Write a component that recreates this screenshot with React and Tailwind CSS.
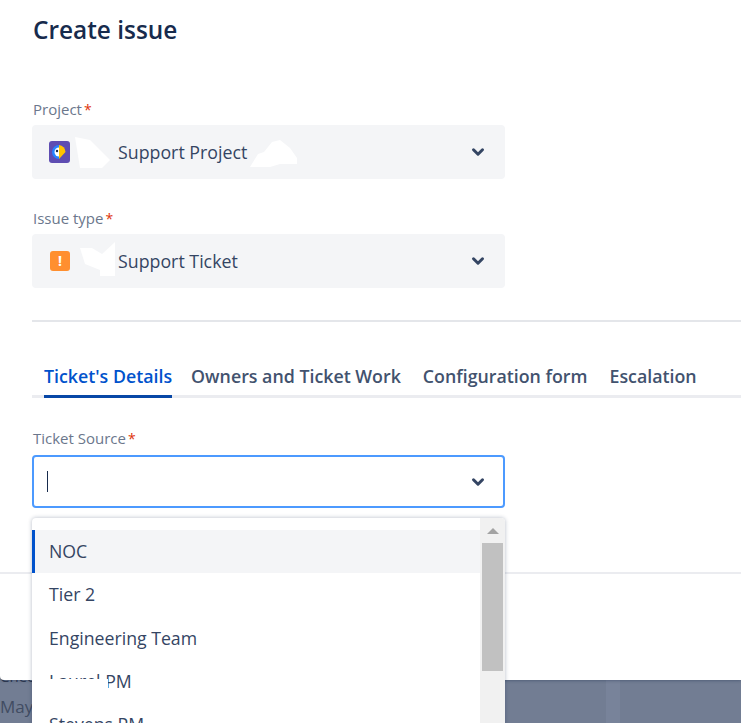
import { ChevronDown } from "lucide-react";

const Label = ({ children }) => (
  <div className="pl-[1px] text-[15px] leading-[18px] font-medium text-[#6b778c]">
    {children}
    <span className="ml-[2px] text-[14px] leading-none text-[#de350b]">*</span>
  </div>
);

const Chevron = () => <ChevronDown size={18} strokeWidth={4} className="text-[#344563]" />;

const ProjectIcon = () => (
  <svg width="21" height="22" viewBox="0 0 21 22" className="ml-[1px] shrink-0">
    <rect width="21" height="22" rx="3" fill="#5e4db2" />
    <path d="M10 4a7 7 0 0 0 0 14z" fill="#2684ff" />
    <path d="M10 6.5a4.5 4.5 0 0 0 0 9z" fill="#ffffff" />
    <path d="M10 4a7 7 0 0 1 6.5 7L10 18z" fill="#ffc400" />
    <circle cx="8" cy="10" r="1.2" fill="#172b4d" />
  </svg>
);

const TicketIcon = () => (
  <div className="ml-[2px] flex h-5 w-5 shrink-0 items-center justify-center rounded-[3px] bg-[#ff8f2f]">
    <span className="text-[14px] leading-none font-bold text-white">!</span>
  </div>
);

// white scribbles that hide names in the screenshot
const Blob = ({ className, d, w, h }) => (
  <svg width={w} height={h} viewBox={`0 0 ${w} ${h}`} className={`absolute ${className}`}>
    <path d={d} fill="#ffffff" />
  </svg>
);

const tabs = ["Owners and Ticket Work", "Configuration form", "Escalation"];

export default function App() {
  return (
    <div
      className="relative h-[723px] overflow-hidden bg-[#727d93]"
      style={{ fontFamily: '"Open Sans", "Noto Sans", sans-serif' }}
    >
      <div className="absolute left-0 top-[666px] text-[15px] leading-[20px] text-[#2f3a50]">Check</div>
      <div className="absolute left-0 top-[696px] text-[17px] leading-[22px] text-[#414c62]">May/</div>
      <div className="absolute left-[606px] top-0 h-full w-[14px] bg-[#78839a]" />

      <div className="relative h-[680px] rounded-bl-[4px] bg-white shadow-[0_1px_3px_rgba(9,30,66,0.3)]">
        <div className="h-[574px] border-b-2 border-[#ebecf0] pl-[32px]">
          <h1 className="pl-[1px] pt-[14px] text-[24.4px] leading-[32px] font-semibold text-[#172b4d]">Create issue</h1>

          <div className="mt-[54px] w-[473px]">
            <Label>Project</Label>
            <div className="relative mt-[7px] flex h-[54px] items-center justify-between rounded-[4px] bg-[#f4f5f7] pl-[16px] pr-[18px]">
              <div className="flex items-center text-[17.8px] text-[#344563]">
                <ProjectIcon />
                <span className="ml-[48px] whitespace-nowrap">Support Project</span>
              </div>
              <Blob w={38} h={31} className="left-[43px] top-[12px]" d="M0 0l15 3 20 20-8 8H5z" />
              <Blob w={47} h={28} className="left-[218px] top-[15px]" d="M0 27l8-13 6-2 8-10 8-2 10 8 7 10v6H30l-10 3z" />
              <Chevron />
            </div>
          </div>

          <div className="mt-[30px] w-[473px]">
            <Label>Issue type</Label>
            <div className="relative mt-[7px] flex h-[54px] items-center justify-between rounded-[4px] bg-[#f4f5f7] pl-[16px] pr-[18px]">
              <div className="flex items-center text-[17.8px] text-[#344563]">
                <TicketIcon />
                <span className="ml-[48px] whitespace-nowrap">Support Ticket</span>
              </div>
              <Blob w={35} h={34} className="left-[48px] top-[8px]" d="M0 6h12l10 6L35 0v34H20v-6L5 22z" />
              <Chevron />
            </div>
          </div>

          <div className="mt-[32px] h-[2px] bg-[#e4e6ea]" />

          <div className="mt-[42px] flex gap-[22px] border-b-[3px] border-[#ebecf0] pl-[12px] text-[17.8px] leading-[24px] font-semibold">
            <div className="-mb-[3px] -mr-[3px] border-b-[3px] border-[#0747a6] pb-[7px] whitespace-nowrap text-[#0052cc]">Ticket's Details</div>
            {tabs.map((t) => (
              <div key={t} className="pb-[7px] whitespace-nowrap text-[#42526e]">{t}</div>
            ))}
          </div>

          <div className="relative mt-[31px] w-[473px]">
            <Label>Ticket Source</Label>
            <div className="mt-[8px] flex h-[53px] items-center justify-between rounded-[4px] border-2 border-[#4c9aff] bg-white pl-[13px] pr-[16px]">
              <div className="h-[21px] w-[1px] bg-[#172b4d]" />
              <Chevron />
            </div>

            {/* open dropdown sits over the footer and the page behind */}
            <div className="absolute left-0 top-[89px] z-10 flex h-[260px] w-[473px] overflow-hidden rounded-t-[4px] bg-white shadow-[0_0_4px_rgba(9,30,66,0.3)]">
              <div className="flex-1 pt-[12px] text-[17.7px] text-[#344563]">
                <div className="flex h-[43px] items-center border-l-[3px] border-[#0052cc] bg-[#f4f5f7] pl-[14px]">NOC</div>
                <div className="flex h-[43px] items-center pl-[17px]">Tier 2</div>
                <div className="flex h-[44px] items-center pl-[17px]">Engineering Team</div>
                <div className="relative flex h-[43px] items-center pl-[17px]">
                  Laurel PM
                  <div className="absolute left-[16px] top-[19px] h-[14px] w-[60px] bg-white" />
                </div>
                <div className="relative flex h-[43px] items-center pl-[17px]">Stevens PM</div>
              </div>
              <div className="flex w-[25px] flex-col items-center bg-[#f1f1f1]">
                <div className="mt-[10px] h-0 w-0 border-x-[6px] border-b-[6px] border-x-transparent border-b-[#a3a3a3]" />
                <div className="mt-[9px] h-[128px] w-[21px] bg-[#c1c1c1]" />
              </div>
            </div>
          </div>
        </div>
      </div>
    </div>
  );
}
